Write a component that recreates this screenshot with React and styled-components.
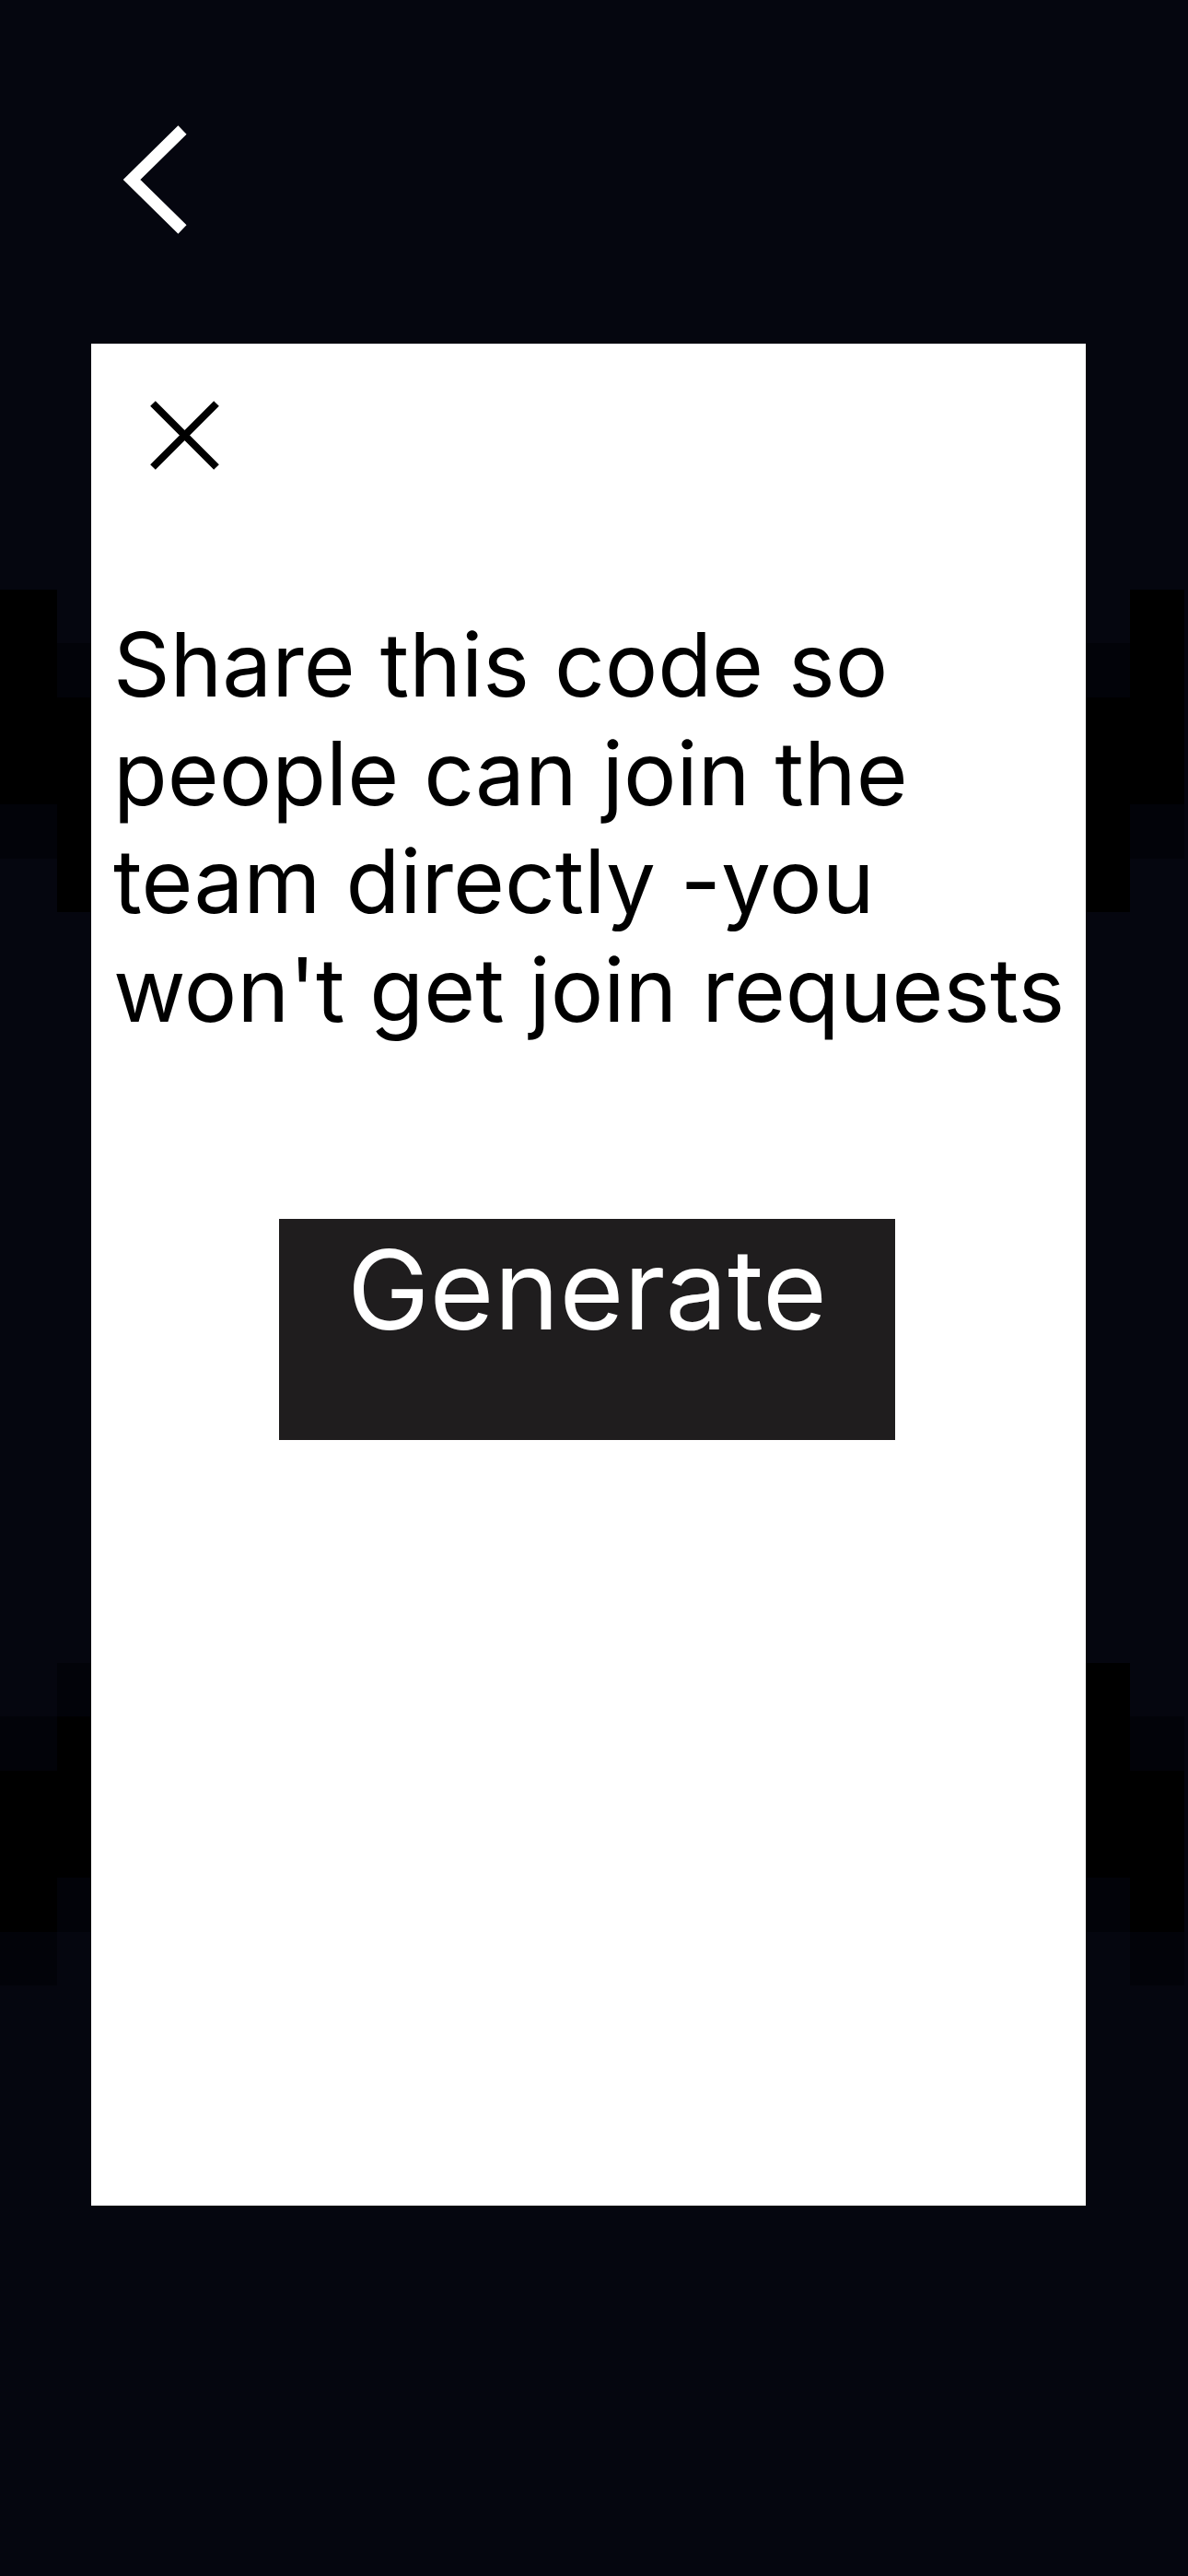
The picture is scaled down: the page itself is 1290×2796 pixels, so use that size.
import styled, { createGlobalStyle } from "styled-components";

const GlobalStyle = createGlobalStyle`
  html, body {
    margin: 0;
    padding: 0;
    background: #05060f;
  }
  * {
    box-sizing: border-box;
  }
`;

const tones = {
  bg: "transparent",
  dim: "#020309",
  black: "#000000",
};

const Page = styled.div`
  width: 1290px;
  min-height: 2796px;
  display: flex;
  flex-direction: column;
  background: #05060f;
  font-family: "Inter", "Noto Sans", sans-serif;
`;

const TopBar = styled.header`
  height: 373px;
  padding: 132px 0 0 128px;
`;

const BackButton = styled.button`
  display: block;
  width: 80px;
  height: 126px;
  padding: 0;
  border: none;
  background: transparent;
  cursor: pointer;
`;

const ModalRow = styled.div`
  display: flex;
  height: 2021px;
`;

const Gutter = styled.div`
  width: ${(p) => p.$width}px;
  display: flex;
  flex-direction: column;
`;

const Band = styled.div`
  margin-top: ${(p) => p.$offset}px;
  display: flex;
  flex-direction: column;
`;

const GhostRow = styled.div`
  display: grid;
  grid-template-columns: ${(p) => p.$cols};
  height: 58.33px;
`;

const GhostCell = styled.div`
  background: ${(p) => tones[p.$tone]};
`;

const Card = styled.section`
  width: 1080px;
  background: #ffffff;
  display: flex;
  flex-direction: column;
  align-items: flex-start;
  padding: 55px 8px 0 24px;
`;

const CloseButton = styled.button`
  display: block;
  width: 90px;
  height: 90px;
  margin-left: 33px;
  padding: 0;
  border: none;
  background: transparent;
  cursor: pointer;
`;

const Message = styled.p`
  margin: 145px 0 0;
  font-size: 96px;
  line-height: 117.6px;
  font-weight: 400;
  color: #000;
  letter-spacing: 0;
`;

const GenerateButton = styled.button`
  width: 669px;
  height: 240px;
  margin: 190px 0 0 180px;
  padding: 4px 0 0;
  border: none;
  border-radius: 0;
  background: #1f1d1e;
  color: #ffffff;
  font-family: "Inter", "Noto Sans", sans-serif;
  font-size: 120px;
  line-height: normal;
  text-align: center;
  display: flex;
  justify-content: center;
  align-items: flex-start;
  cursor: pointer;
`;

const leftTop = [
  ["black", "bg"],
  ["black", "dim"],
  ["black", "black"],
  ["black", "black"],
  ["dim", "black"],
  ["bg", "black"],
];
const leftBottom = [
  ["bg", "dim"],
  ["dim", "black"],
  ["black", "black"],
  ["black", "black"],
  ["black", "dim"],
  ["dim", "bg"],
];
const rightTop = [
  ["bg", "black"],
  ["dim", "black"],
  ["black", "black"],
  ["black", "black"],
  ["black", "dim"],
  ["black", "bg"],
];
const rightBottom = [
  ["black", "bg"],
  ["black", "dim"],
  ["black", "black"],
  ["black", "black"],
  ["dim", "black"],
  ["bg", "dim"],
];

const Ghosts = ({ rows, cols, offset }) => (
  <Band $offset={offset}>
    {rows.map((row, i) => (
      <GhostRow key={i} $cols={cols}>
        {row.map((tone, j) => (
          <GhostCell key={j} $tone={tone} />
        ))}
      </GhostRow>
    ))}
  </Band>
);

const ChevronLeft = () => (
  <svg width="80" height="126" viewBox="0 0 80 126" fill="none">
    <polyline
      points="70,9 15,63 70,117"
      stroke="#ffffff"
      strokeWidth="13"
      strokeLinecap="butt"
      strokeLinejoin="miter"
    />
  </svg>
);

const CloseIcon = () => (
  <svg width="90" height="90" viewBox="0 0 90 90" fill="none">
    <path
      d="M10 10 L79 79 M79 10 L10 79"
      stroke="#000000"
      strokeWidth="8"
      strokeLinecap="butt"
    />
  </svg>
);

const App = () => {
  return (
    <>
      <GlobalStyle />
      <Page>
        <TopBar>
          <BackButton aria-label="Back">
            <ChevronLeft />
          </BackButton>
        </TopBar>
        <ModalRow>
          <Gutter $width={99}>
            <Ghosts rows={leftTop} cols="62px 37px" offset={267} />
            <Ghosts rows={leftBottom} cols="62px 37px" offset={815} />
          </Gutter>
          <Card>
            <CloseButton aria-label="Close">
              <CloseIcon />
            </CloseButton>
            <Message>
              Share this code so people can join the team directly -you
              won't get join requests
            </Message>
            <GenerateButton>Generate</GenerateButton>
          </Card>
          <Gutter $width={111}>
            <Ghosts rows={rightTop} cols="48px 59px 4px" offset={267} />
            <Ghosts rows={rightBottom} cols="48px 59px 4px" offset={815} />
          </Gutter>
        </ModalRow>
      </Page>
    </>
  );
};

export default App;
